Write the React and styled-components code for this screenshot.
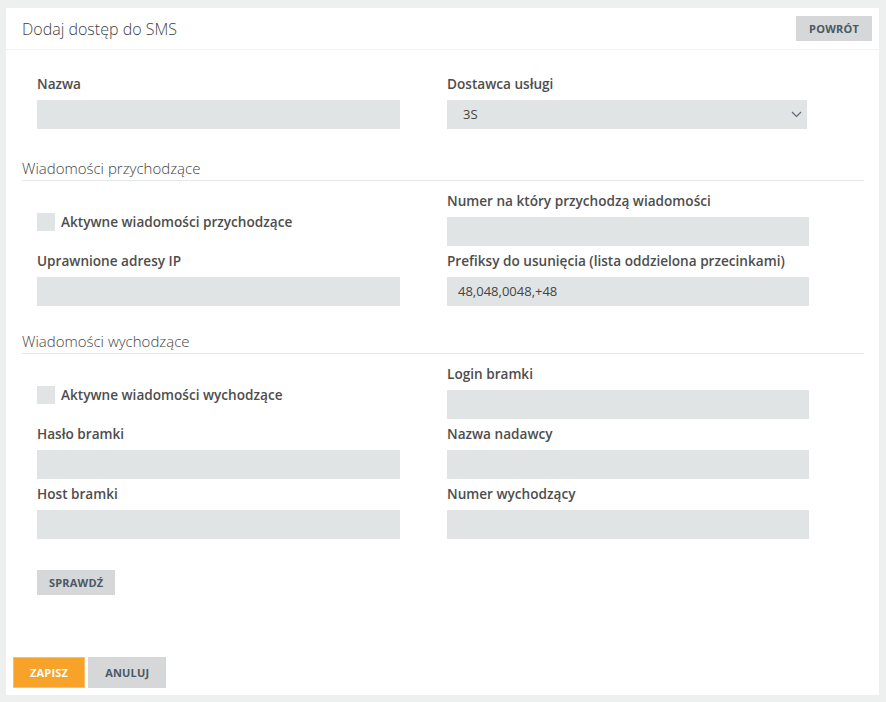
import styled, { createGlobalStyle } from 'styled-components'

const GlobalStyle = createGlobalStyle`
  html, body {
    margin: 0;
    padding: 0;
    background: #eef0ef;
  }
  body {
    font-family: "Open Sans", "Liberation Sans", sans-serif;
    color: #444;
  }
`

// LAYOUT

const Page = styled.div`
  padding: 8px 7px 7px 6px;
  box-sizing: border-box;
  height: 702px;
`

const Panel = styled.div`
  background: #fff;
  height: 687px;
  display: flex;
  flex-direction: column;
`

const Header = styled.div`
  display: flex;
  align-items: center;
  justify-content: space-between;
  height: 41px;
  padding: 0 7px 0 16px;
  border-bottom: 1px solid #f1f2f2;
`

const Title = styled.h1`
  margin: 0;
  font-size: 16px;
  font-weight: 300;
  color: #3f3f3f;
`

const Body = styled.div`
  padding: 24px 15px 0 16px;
`

const Grid = styled.div`
  display: grid;
  grid-template-columns: 363px 362px;
  column-gap: 47px;
  row-gap: 5px;
  padding-left: 15px;
`

const Field = styled.div`
  display: flex;
  flex-direction: column;
`

const Label = styled.label`
  font-size: 13.6px;
  font-weight: 600;
  line-height: 20px;
  color: #4d4d4d;
  margin-bottom: 6px;
`

const Input = styled.div`
  height: 29px;
  width: ${({ $w }) => $w || '100%'};
  background: #e1e4e5;
  font-size: 13px;
  line-height: 29px;
  color: #444;
  padding-left: ${({ $pad }) => $pad || '11px'};
  box-sizing: border-box;
  display: flex;
  align-items: center;
  justify-content: space-between;
  padding-right: 5px;
`

const SectionTitle = styled.h2`
  margin: ${({ $top }) => $top || '29px'} 0 10px;
  padding-bottom: 2px;
  font-size: 15px;
  font-weight: 300;
  line-height: 20px;
  color: #444;
  border-bottom: 1px solid #e6e8e8;
`

const CheckRow = styled.div`
  display: flex;
  align-items: center;
  gap: 6px;
  align-self: end;
  margin-bottom: 15px;
  font-size: 13.6px;
  font-weight: 600;
  color: #4d4d4d;
`

const Box = styled.span`
  width: 18px;
  height: 18px;
  background: #e1e4e5;
`

// BUTTONS

const Button = styled.button`
  font-family: "Open Sans", "Liberation Sans", sans-serif;
  font-weight: 700;
  font-size: 11px;
  letter-spacing: 0.2px;
  text-transform: uppercase;
  height: ${({ $h }) => $h || '25px'};
  padding: 0 ${({ $px }) => $px || '11px'};
  border: 1px solid ${({ $primary }) => ($primary ? '#fbbf6a' : '#d4d6d8')};
  background: ${({ $primary }) => ($primary ? '#f7a229' : '#d5d7d9')};
  color: ${({ $primary }) => ($primary ? '#fff' : '#4a5964')};
  cursor: pointer;
`

const CheckWrap = styled.div`
  padding: 31px 0 0 15px;
`

const Footer = styled.div`
  margin-top: auto;
  display: flex;
  gap: 3px;
  padding: 0 0 7px 7px;
`

function Chevron() {
  return (
    <svg width="11" height="7" viewBox="0 0 11 7" fill="none">
      <path d="M1 1l4.5 4.5L10 1" stroke="#5a6770" strokeWidth="1.1" />
    </svg>
  )
}

export default function App() {
  return (
    <Page>
      <GlobalStyle />
      <Panel>
        <Header>
          <Title>Dodaj dostęp do SMS</Title>
          <Button $px="12px">Powrót</Button>
        </Header>
        <Body>
          <Grid>
            <Field>
              <Label>Nazwa</Label>
              <Input />
            </Field>
            <Field>
              <Label>Dostawca usługi</Label>
              <Input $w="360px" $pad="16px">
                3S
                <Chevron />
              </Input>
            </Field>
          </Grid>

          <SectionTitle>Wiadomości przychodzące</SectionTitle>
          <Grid>
            <CheckRow>
              <Box />
              Aktywne wiadomości przychodzące
            </CheckRow>
            <Field>
              <Label>Numer na który przychodzą wiadomości</Label>
              <Input />
            </Field>
            <Field>
              <Label>Uprawnione adresy IP</Label>
              <Input />
            </Field>
            <Field>
              <Label>Prefiksy do usunięcia (lista oddzielona przecinkami)</Label>
              <Input>48,048,0048,+48</Input>
            </Field>
          </Grid>

          <SectionTitle $top="25px">Wiadomości wychodzące</SectionTitle>
          <Grid>
            <CheckRow>
              <Box />
              Aktywne wiadomości wychodzące
            </CheckRow>
            <Field>
              <Label>Login bramki</Label>
              <Input />
            </Field>
            <Field>
              <Label>Hasło bramki</Label>
              <Input />
            </Field>
            <Field>
              <Label>Nazwa nadawcy</Label>
              <Input />
            </Field>
            <Field>
              <Label>Host bramki</Label>
              <Input />
            </Field>
            <Field>
              <Label>Numer wychodzący</Label>
              <Input />
            </Field>
          </Grid>

          <CheckWrap>
            <Button $px="11px">Sprawdź</Button>
          </CheckWrap>
        </Body>
        <Footer>
          <Button $primary $h="31px" $px="16px">Zapisz</Button>
          <Button $h="31px" $px="16px">Anuluj</Button>
        </Footer>
      </Panel>
    </Page>
  )
}
